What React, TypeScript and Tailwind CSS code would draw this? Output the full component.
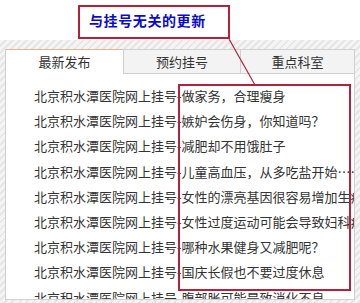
import React from "react";

const rows = [
  "做家务，合理瘦身",
  "嫉妒会伤身，你知道吗？",
  "减肥却不用饿肚子",
  "儿童高血压，从多吃盐开始……",
  "女性的漂亮基因很容易增加生病风险",
  "女性过度运动可能会导致妇科疾病",
  "哪种水果健身又减肥呢？",
  "国庆长假也不要过度休息",
  "腹部胀可能是致消化不良",
];

export default function App() {
  return (
    <div className="relative w-[360px] h-[303px] overflow-hidden bg-white font-['Noto_Sans_CJK_SC',sans-serif]">
      <div className="h-[40px] bg-white pt-[5px] pl-[78px]">
        <div className="w-[152px] h-[34px] border-2 border-[#b3213a] pl-[9px] pt-[3px] text-[14px] leading-[20px] font-bold text-[#0a0ad0] tracking-[0.6px]">
          与挂号无关的更新
        </div>
      </div>
      <div className="h-[263px] px-[5px] pt-[9px] bg-[repeating-linear-gradient(135deg,#f4f4f4_0px,#f4f4f4_3px,#e6e6e6_3px,#e6e6e6_5px)]">
        <div className="h-[251px] bg-white border-l border-r border-b border-[#d0d0d0] overflow-hidden">
          <div className="flex h-[25px] text-[13px] leading-[24px] text-[#333]">
            <div className="w-[117px] border-t border-[#e3b596] bg-white text-center">最新发布</div>
            <div className="w-[117px] border-t border-b border-l border-[#d0d0d0] bg-[#f3f3f3] text-center">预约挂号</div>
            <div className="flex-1 border-t border-b border-l border-[#d0d0d0] bg-[#f3f3f3] text-center">重点科室</div>
          </div>
          <div className="pl-[28px] pt-[9px] text-[13px] leading-[25.2px] text-[#333] whitespace-nowrap">
            {rows.map((r, i) => (
              <div key={i}>北京积水潭医院网上挂号-{r}</div>
            ))}
          </div>
        </div>
      </div>
      <div className="absolute left-[178px] top-[84px] w-[173px] h-[207px] border-2 border-[#b3213a]" />
      <svg className="absolute left-0 top-0" width="360" height="303">
        <line x1="229" y1="39" x2="255" y2="85" stroke="#b3213a" strokeWidth="1.2" />
      </svg>
    </div>
  );
}
